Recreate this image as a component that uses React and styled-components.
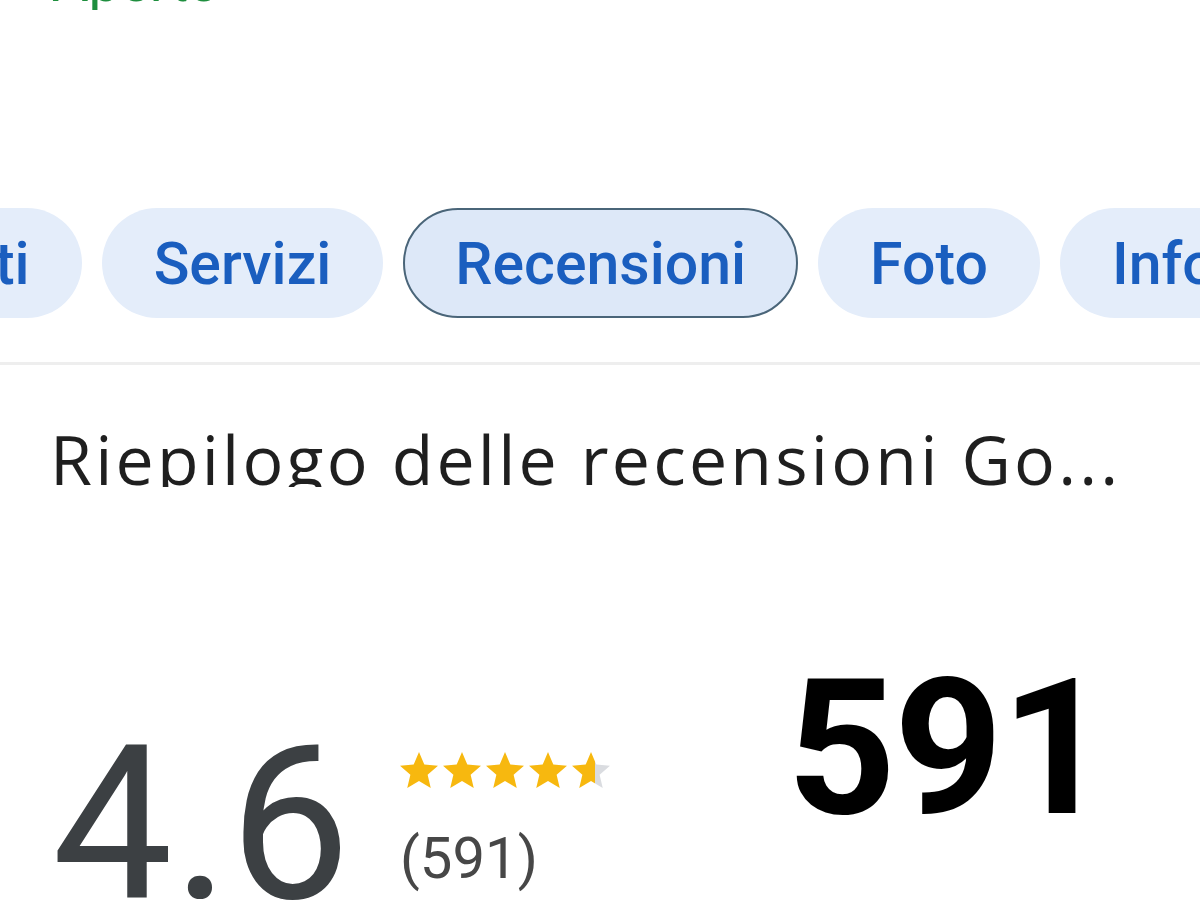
import React from 'react'
import styled, { createGlobalStyle } from 'styled-components'

const Global = createGlobalStyle`
  html, body {
    margin: 0;
    padding: 0;
    background: #fff;
  }
  body {
    font-family: Roboto, "Noto Sans", Arial, sans-serif;
    overflow: hidden;
  }
`

const Page = styled.div`
  width: 1200px;
  height: 900px;
  overflow: hidden;
  background: #fff;
`

const TopStrip = styled.div`
  height: 10px;
  overflow: hidden;
  padding-left: 52px;
`

const OpenState = styled.div`
  margin-top: -46px;
  font-size: 56px;
  line-height: 56px;
  color: #1e8e3e;
`

const Tabs = styled.div`
  display: flex;
  gap: 20px;
  margin-top: 198px;
  margin-left: -233px;
  white-space: nowrap;
`

const Chip = styled.div`
  flex: none;
  box-sizing: border-box;
  height: 110px;
  display: flex;
  align-items: center;
  padding: 0 50px;
  border-radius: 55px;
  font-size: 59px;
  font-weight: 500;
  color: #1a5ebf;
  background: ${p => (p.active ? '#dde8f8' : '#e4edfa')};
  border: 2px solid ${p => (p.active ? '#4a6579' : 'transparent')};
`

const Divider = styled.div`
  margin-top: 44px;
  height: 3px;
  background: #eeeeee;
`

const Heading = styled.h2`
  margin: 60px 0 0 50px;
  height: 62px;
  overflow: hidden;
  font-family: "Open Sans", Roboto, sans-serif;
  font-size: 68px;
  line-height: 68px;
  font-weight: 400;
  letter-spacing: 3.2px;
  color: #1f1f1f;
  white-space: nowrap;
`

const Summary = styled.div`
  display: grid;
  grid-template-columns: 348px 387px auto;
  margin-top: 156px;
  padding-left: 52px;
`

const Average = styled.div`
  margin-top: 74px;
  font-size: 215px;
  line-height: 215px;
  color: #3c4043;
`

const Middle = styled.div`
  display: flex;
  flex-direction: column;
  padding-top: 109px;
`

const Stars = styled.div`
  display: flex;
  gap: 5px;
`

const Count = styled.div`
  margin-top: 39px;
  font-size: 58px;
  line-height: 58px;
  color: #474747;
`

const Total = styled.div`
  margin-top: 10px;
  font-size: 190px;
  line-height: 190px;
  font-weight: 700;
  letter-spacing: -2px;
  color: #000;
`

const STAR = 'M12 17.27L18.18 21l-1.64-7.03L22 9.24l-7.19-.61L12 2 9.19 8.63 2 9.24l5.46 4.73L5.82 21z'

const Star = ({ fill, id }) => (
  <svg width="38" height="38" viewBox="2 2 20 20">
    <defs>
      <linearGradient id={id} x1="0" x2="1" y1="0" y2="0">
        <stop offset={fill} stopColor="#f7b80f" />
        <stop offset={fill} stopColor="#dadce0" />
      </linearGradient>
    </defs>
    <path d={STAR} fill={`url(#${id})`} />
  </svg>
)

const tabs = ['Contatti', 'Servizi', 'Recensioni', 'Foto', 'Informazioni']

export default function App() {
  const rating = 4.6
  return (
    <Page>
      <Global />
      <TopStrip>
        <OpenState>Aperto</OpenState>
      </TopStrip>
      <Tabs>
        {tabs.map(t => (
          <Chip key={t} active={t === 'Recensioni'}>{t}</Chip>
        ))}
      </Tabs>
      <Divider />
      <Heading>Riepilogo delle recensioni Go...</Heading>
      <Summary>
        <Average>4.6</Average>
        <Middle>
          <Stars>
            {[0, 1, 2, 3, 4].map(i => (
              <Star key={i} id={`star${i}`} fill={Math.max(0, Math.min(1, rating - i))} />
            ))}
          </Stars>
          <Count>(591)</Count>
        </Middle>
        <Total>591</Total>
      </Summary>
    </Page>
  )
}
